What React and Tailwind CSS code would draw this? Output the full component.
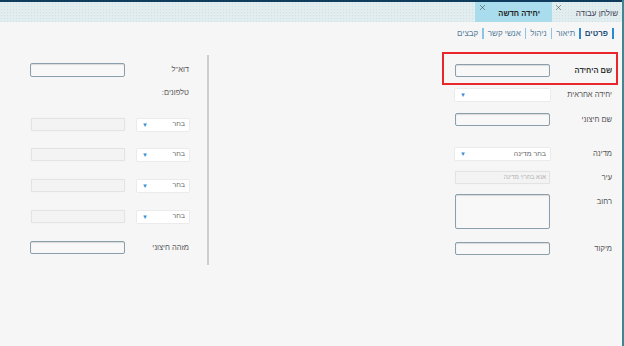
import { X } from "lucide-react";

const font = { fontFamily: '"Liberation Sans", "DejaVu Sans", Arial, sans-serif' };

const Input = ({ className = "" }) => (
  <div
    className={`w-[95px] h-[13px] rounded-[2px] border border-[#8b9eac] bg-[#f8f8f8] shadow-[inset_0_1px_1px_rgba(0,0,0,0.12)] ${className}`}
  />
);

const Disabled = ({ text, className = "" }) => (
  <div
    className={`w-[94px] h-[13px] rounded-[1px] border border-[#e3e3e3] bg-[#f3f3f3] shadow-[0_0_1px_rgba(0,0,0,0.08)] flex items-center pr-[3px] text-[6px] text-[#b0b0b0] ${className}`}
  >
    {text}
  </div>
);

const Select = ({ text, className = "" }) => (
  <div
    className={`h-[12px] bg-white shadow-[0_0_1px_rgba(0,0,0,0.25)] flex items-center justify-between pr-[4px] pl-[5px] text-[7px] text-[#666] ${className}`}
  >
    <span>{text}</span>
    <span className="text-[6px] leading-none text-[#3a8fcf]">▼</span>
  </div>
);

const Label = ({ children, bold, className = "" }) => (
  <div
    className={`w-[62px] text-right text-[7.5px] leading-none ${bold ? "font-bold text-[#333]" : "text-[#555]"} ${className}`}
  >
    {children}
  </div>
);

const SubTab = ({ children, active, first }) => (
  <div className="flex items-center">
    {first && <div className="w-[2px] h-[11px] bg-[#2a8ad0]" />}
    <span
      className={`px-[4px] text-[8px] leading-none ${active ? "font-bold text-[#234e78]" : "text-[#557d9c]"}`}
    >
      {children}
    </span>
    <div className={`w-[1.5px] h-[11px] ${active ? "bg-[#2a8ad0]" : "bg-[#8cc4e6]"}`} />
  </div>
);

export default function App() {
  return (
    <div
      dir="rtl"
      style={font}
      className="relative w-[624px] h-[346px] overflow-hidden bg-[#f6f6f6] border-r-2 border-[#3f8592]"
    >
      {/* top strip */}
      <div className="h-[2px] bg-[#0f3b5c]" />
      <div className="flex h-[20px] bg-[#e2edf0] bg-[radial-gradient(circle,#d0e1e6_0.7px,transparent_0.9px)] bg-[length:3px_3px]">
        <div className="relative w-[70px] h-full flex items-center pr-[4px] pt-[4px] text-[8px] text-[#445]">
          שולחן עבודה
          <X size={9} strokeWidth={1.3} className="absolute left-[2px] top-[1px] text-[#333]" />
        </div>
        <div className="relative w-[77px] h-full bg-[#a9dcec] flex items-center pr-[12px] pt-[4px] text-[7.5px] font-bold text-[#222]">
          יחידה חדשה
          <X size={9} strokeWidth={1.3} className="absolute left-[3px] top-[1px] text-[#333]" />
        </div>
      </div>

      {/* sub tabs */}
      <div className="flex items-center h-[11px] mt-[6px] pr-[8px]">
        <SubTab active first>פרטים</SubTab>
        <SubTab>תיאור</SubTab>
        <SubTab>ניהול</SubTab>
        <SubTab>אנשי קשר</SubTab>
        <span className="px-[4px] text-[8px] leading-none text-[#557d9c]">קבצים</span>
      </div>

      {/* body */}
      <div className="flex">
        {/* right column */}
        <div className="relative w-[413px] pr-[10px] flex flex-col">
          <div className="absolute right-[4px] top-[13px] w-[176px] h-[33px] border-2 border-[#e8262b]" />
          <div className="flex items-center mt-[25px]">
            <Label bold>שם היחידה</Label>
            <Input />
          </div>
          <div className="flex items-center mt-[12px]">
            <Label>יחידה אחראית</Label>
            <Select text="" className="w-[95px]" />
          </div>
          <div className="flex items-center mt-[12px]">
            <Label>שם חיצוני</Label>
            <Input />
          </div>
          <div className="flex items-center mt-[22px]">
            <Label>מדינה</Label>
            <Select text="בחר מדינה" className="w-[95px]" />
          </div>
          <div className="flex items-center mt-[11px]">
            <Label>עיר</Label>
            <Disabled text="אנא בחר/י מדינה" className="w-[95px]" />
          </div>
          <div className="flex items-start mt-[10px]">
            <Label className="pt-[4px]">רחוב</Label>
            <Input className="h-[35px]" />
          </div>
          <div className="flex items-center mt-[13px]">
            <Label>מיקוד</Label>
            <Input />
          </div>
        </div>

        {/* divider */}
        <div className="w-[2px] h-[210px] mt-[16px] bg-[#cdcdcd]" />

        {/* left column */}
        <div className="w-[207px] pr-[18px] flex flex-col">
          <div className="flex items-center mt-[24px]">
            <Label className="w-[64px]">דוא"ל</Label>
            <Input className="h-[14px] w-[94px]" />
          </div>
          <div className="flex items-center h-[12px] mt-[10px]">
            <Label className="w-[64px]">טלפונים:</Label>
          </div>
          {[19, 17, 18, 18].map((m, i) => (
            <div key={i} className="flex items-center gap-[12px]" style={{ marginTop: m }}>
              <Select text="בחר" className="w-[52px]" />
              <Disabled />
            </div>
          ))}
          <div className="flex items-center mt-[18px]">
            <Label className="w-[64px]">מזהה חיצוני</Label>
            <Input className="w-[94px]" />
          </div>
        </div>
      </div>
    </div>
  );
}
